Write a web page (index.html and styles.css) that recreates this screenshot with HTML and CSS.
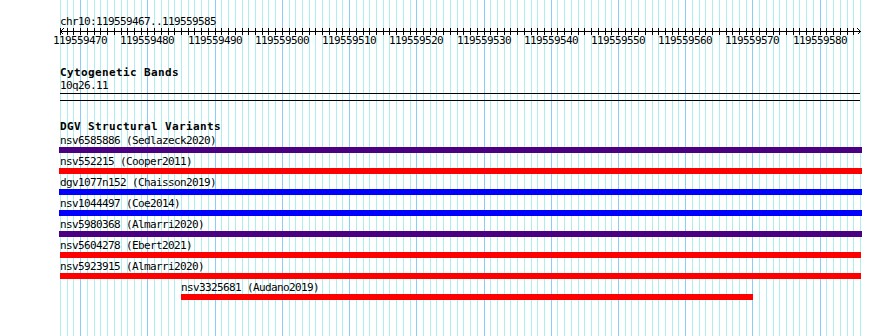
FILE: index.html
```html
<!DOCTYPE html>
<html>
<head>
<meta charset="utf-8">
<title>chr10:119559467..119559585</title>
<link rel="stylesheet" href="styles.css">
</head>
<body>
<div class="panel">
  <svg class="grid" width="890" height="336" viewBox="0 0 890 336" aria-hidden="true">
    <path class="grid-minor" d="M60.5 0v336M67.5 0v336M73.5 0v336M87.5 0v336M94.5 0v336M100.5 0v336M107.5 0v336M114.5 0v336M121.5 0v336M127.5 0v336M134.5 0v336M141.5 0v336M154.5 0v336M161.5 0v336M168.5 0v336M174.5 0v336M181.5 0v336M188.5 0v336M194.5 0v336M201.5 0v336M208.5 0v336M221.5 0v336M228.5 0v336M235.5 0v336M242.5 0v336M248.5 0v336M255.5 0v336M262.5 0v336M268.5 0v336M275.5 0v336M289.5 0v336M295.5 0v336M302.5 0v336M309.5 0v336M315.5 0v336M322.5 0v336M329.5 0v336M336.5 0v336M342.5 0v336M356.5 0v336M363.5 0v336M369.5 0v336M376.5 0v336M383.5 0v336M389.5 0v336M396.5 0v336M403.5 0v336M410.5 0v336M423.5 0v336M430.5 0v336M436.5 0v336M443.5 0v336M450.5 0v336M457.5 0v336M463.5 0v336M470.5 0v336M477.5 0v336M490.5 0v336M497.5 0v336M504.5 0v336M510.5 0v336M517.5 0v336M524.5 0v336M531.5 0v336M537.5 0v336M544.5 0v336M557.5 0v336M564.5 0v336M571.5 0v336M578.5 0v336M584.5 0v336M591.5 0v336M598.5 0v336M605.5 0v336M611.5 0v336M625.5 0v336M631.5 0v336M638.5 0v336M645.5 0v336M652.5 0v336M658.5 0v336M665.5 0v336M672.5 0v336M678.5 0v336M692.5 0v336M699.5 0v336M705.5 0v336M712.5 0v336M719.5 0v336M726.5 0v336M732.5 0v336M739.5 0v336M746.5 0v336M759.5 0v336M766.5 0v336M773.5 0v336M779.5 0v336M786.5 0v336M793.5 0v336M799.5 0v336M806.5 0v336M813.5 0v336M826.5 0v336M833.5 0v336M840.5 0v336M847.5 0v336M853.5 0v336M860.5 0v336"/>
    <path class="grid-major" d="M80.5 0v336M147.5 0v336M215.5 0v336M282.5 0v336M349.5 0v336M416.5 0v336M484.5 0v336M551.5 0v336M618.5 0v336M685.5 0v336M752.5 0v336M820.5 0v336"/>
  </svg>

  <div class="content">
    <div class="overview-label">chr10:119559467..119559585</div>
    <svg class="ruler" width="800" height="6" viewBox="0 0 800 6" aria-hidden="true">
      <path class="ruler-line" d="M0 3.5H800M3.5 0.5L0.5 3.5L3.5 6.5M797.5 0.5L800.5 3.5L797.5 6.5"/>
      <path class="ruler-ticks" d="M0.5 0v7M7.5 0v7M13.5 0v7M20.5 0v7M27.5 0v7M34.5 0v7M40.5 0v7M47.5 0v7M54.5 0v7M61.5 0v7M67.5 0v7M74.5 0v7M81.5 0v7M87.5 0v7M94.5 0v7M101.5 0v7M108.5 0v7M114.5 0v7M121.5 0v7M128.5 0v7M134.5 0v7M141.5 0v7M148.5 0v7M155.5 0v7M161.5 0v7M168.5 0v7M175.5 0v7M182.5 0v7M188.5 0v7M195.5 0v7M202.5 0v7M208.5 0v7M215.5 0v7M222.5 0v7M229.5 0v7M235.5 0v7M242.5 0v7M249.5 0v7M255.5 0v7M262.5 0v7M269.5 0v7M276.5 0v7M282.5 0v7M289.5 0v7M296.5 0v7M303.5 0v7M309.5 0v7M316.5 0v7M323.5 0v7M329.5 0v7M336.5 0v7M343.5 0v7M350.5 0v7M356.5 0v7M363.5 0v7M370.5 0v7M376.5 0v7M383.5 0v7M390.5 0v7M397.5 0v7M403.5 0v7M410.5 0v7M417.5 0v7M424.5 0v7M430.5 0v7M437.5 0v7M444.5 0v7M450.5 0v7M457.5 0v7M464.5 0v7M471.5 0v7M477.5 0v7M484.5 0v7M491.5 0v7M497.5 0v7M504.5 0v7M511.5 0v7M518.5 0v7M524.5 0v7M531.5 0v7M538.5 0v7M545.5 0v7M551.5 0v7M558.5 0v7M565.5 0v7M571.5 0v7M578.5 0v7M585.5 0v7M592.5 0v7M598.5 0v7M605.5 0v7M612.5 0v7M618.5 0v7M625.5 0v7M632.5 0v7M639.5 0v7M645.5 0v7M652.5 0v7M659.5 0v7M666.5 0v7M672.5 0v7M679.5 0v7M686.5 0v7M692.5 0v7M699.5 0v7M706.5 0v7M713.5 0v7M719.5 0v7M726.5 0v7M733.5 0v7M739.5 0v7M746.5 0v7M753.5 0v7M760.5 0v7M766.5 0v7M773.5 0v7M780.5 0v7M787.5 0v7M793.5 0v7"/>
    </svg>
    <div class="tick-labels">
      <span class="tick-label" style="left:-7px">119559470</span>
      <span class="tick-label" style="left:60px">119559480</span>
      <span class="tick-label" style="left:128px">119559490</span>
      <span class="tick-label" style="left:195px">119559500</span>
      <span class="tick-label" style="left:262px">119559510</span>
      <span class="tick-label" style="left:329px">119559520</span>
      <span class="tick-label" style="left:397px">119559530</span>
      <span class="tick-label" style="left:464px">119559540</span>
      <span class="tick-label" style="left:531px">119559550</span>
      <span class="tick-label" style="left:598px">119559560</span>
      <span class="tick-label" style="left:665px">119559570</span>
      <span class="tick-label" style="left:733px">119559580</span>
    </div>

    <section class="track track-cyto">
      <h2 class="track-title">Cytogenetic Bands</h2>
      <div class="feature-label">10q26.11</div>
      <div class="band"></div>
    </section>

    <section class="track track-dgv">
      <h2 class="track-title">DGV Structural Variants</h2>
      <div class="features">
        <div class="feature">
          <div class="feature-label">nsv6585886 (Sedlazeck2020)</div>
          <div class="bar sv-both" style="margin-left:-1px;width:803px"></div>
        </div>
        <div class="feature">
          <div class="feature-label">nsv552215 (Cooper2011)</div>
          <div class="bar sv-loss" style="margin-left:-1px;width:803px"></div>
        </div>
        <div class="feature">
          <div class="feature-label">dgv1077n152 (Chaisson2019)</div>
          <div class="bar sv-gain" style="margin-left:-1px;width:803px"></div>
        </div>
        <div class="feature">
          <div class="feature-label">nsv1044497 (Coe2014)</div>
          <div class="bar sv-gain" style="margin-left:-1px;width:803px"></div>
        </div>
        <div class="feature">
          <div class="feature-label">nsv5980368 (Almarri2020)</div>
          <div class="bar sv-both" style="margin-left:-1px;width:803px"></div>
        </div>
        <div class="feature">
          <div class="feature-label">nsv5604278 (Ebert2021)</div>
          <div class="bar sv-loss" style="margin-left:0px;width:801px"></div>
        </div>
        <div class="feature">
          <div class="feature-label">nsv5923915 (Almarri2020)</div>
          <div class="bar sv-loss" style="margin-left:0px;width:801px"></div>
        </div>
        <div class="feature" style="padding-left:121px">
          <div class="feature-label">nsv3325681 (Audano2019)</div>
          <div class="bar sv-loss" style="width:572px"></div>
        </div>
      </div>
    </section>
  </div>
</div>
</body>
</html>
```

FILE: styles.css
```css
html, body {
  margin: 0;
  padding: 0;
  background: #ffffff;
}

body {
  font-family: "DejaVu Sans Mono", "Liberation Mono", monospace;
  font-size: 11px;
  color: #000000;
}

.panel {
  position: relative;
  width: 890px;
  height: 336px;
  overflow: hidden;
  background: #ffffff;
}

.grid {
  position: absolute;
  top: 0;
  left: 0;
  display: block;
}

.grid-minor {
  stroke: #afeeee;
  stroke-width: 1;
  fill: none;
  shape-rendering: crispEdges;
}

.grid-major {
  stroke: #87cefa;
  stroke-width: 1;
  fill: none;
  shape-rendering: crispEdges;
}

.content {
  position: relative;
  width: 800px;
  padding-left: 60px;
  display: flex;
  flex-direction: column;
}

.overview-label,
.feature-label,
.tick-label {
  font-size: 11px;
  letter-spacing: -0.62px;
  line-height: 13px;
  height: 13px;
  white-space: nowrap;
}

.overview-label {
  margin-top: 15px;
}

.ruler {
  display: block;
  overflow: visible;
}

.ruler-line,
.ruler-ticks {
  stroke: #000000;
  stroke-width: 1;
  fill: none;
  shape-rendering: crispEdges;
}

.tick-labels {
  position: relative;
  height: 13px;
}

.tick-label {
  position: absolute;
  top: 0;
}

.track {
  display: flex;
  flex-direction: column;
}

.track-cyto {
  margin-top: 19px;
}

.track-dgv {
  margin-top: 19px;
}

.track-title {
  margin: 0;
  font-size: 11px;
  font-weight: bold;
  letter-spacing: 0.38px;
  line-height: 13px;
  height: 13px;
  white-space: nowrap;
}

.band {
  margin-top: 1px;
  height: 6px;
  border-top: 1px solid #000000;
  border-bottom: 1px solid #000000;
  width: 800px;
}

.features {
  margin-top: 1px;
  display: flex;
  flex-direction: column;
  gap: 2px;
}

.feature {
  display: flex;
  flex-direction: column;
}

.bar {
  height: 6px;
}

.sv-loss { background: #ff0000; }
.sv-gain { background: #0000ff; }
.sv-both { background: #4b0082; }
```
